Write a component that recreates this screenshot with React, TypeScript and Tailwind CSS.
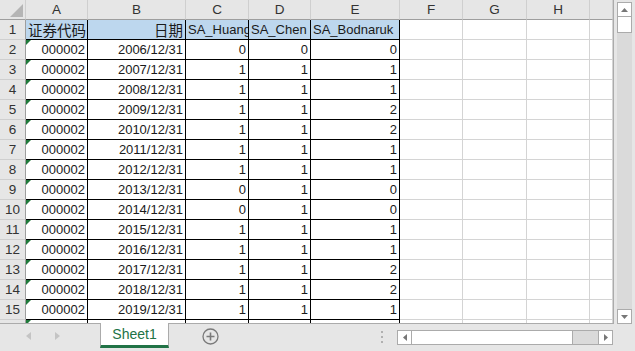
import React from "react";

const colLetters = ["A", "B", "C", "D", "E", "F", "G", "H", ""];

const rows: [string, string, number, number, number][] = [
  ["000002", "2006/12/31", 0, 0, 0],
  ["000002", "2007/12/31", 1, 1, 1],
  ["000002", "2008/12/31", 1, 1, 1],
  ["000002", "2009/12/31", 1, 1, 2],
  ["000002", "2010/12/31", 1, 1, 2],
  ["000002", "2011/12/31", 1, 1, 1],
  ["000002", "2012/12/31", 1, 1, 1],
  ["000002", "2013/12/31", 0, 1, 0],
  ["000002", "2014/12/31", 0, 1, 0],
  ["000002", "2015/12/31", 1, 1, 1],
  ["000002", "2016/12/31", 1, 1, 1],
  ["000002", "2017/12/31", 1, 1, 2],
  ["000002", "2018/12/31", 1, 1, 2],
  ["000002", "2019/12/31", 1, 1, 1],
];

function DataCell({ children, left, blue, flag }: { children?: React.ReactNode; left?: boolean; blue?: boolean; flag?: boolean }) {
  return (
    <div
      className={`relative h-5 overflow-hidden whitespace-nowrap border-r border-b border-black px-[2px] pt-[1px] flex items-center ${
        left ? "justify-start" : "justify-end"
      } ${blue ? "bg-[#bdd7ee]" : "bg-white"}`}
    >
      {flag && (
        <span className="absolute left-0 top-0 w-0 h-0 border-t-[5px] border-r-[5px] border-t-[#1f7a3a] border-r-transparent" />
      )}
      {children}
    </div>
  );
}

function EmptyCell() {
  return <div className="h-5 border-r border-b border-[#d4d4d4] bg-white" />;
}

function RowHeader({ n }: { n: number }) {
  return (
    <div className="h-5 pt-[1px] flex items-center justify-center bg-[#e6e6e6] border-r border-b border-r-[#9e9e9e] border-b-[#cfcfcf] text-[#333] text-[13.5px]">
      {n}
    </div>
  );
}

const cjk = "font-['Noto_Sans_CJK_SC',sans-serif] text-[14.5px] leading-[18px]";

export default function App() {
  return (
    <div className="w-[635px] h-[351px] overflow-hidden bg-[#e6e6e6] font-['Liberation_Sans',Arial,sans-serif] text-[13px] text-[#1a1a1a] flex flex-col">
      <div className="flex h-[324px]">
        {/* sheet grid */}
        <div className="w-[614px] h-[324px] overflow-hidden border-r border-b border-[#ababab] bg-white">
          <div className="grid grid-cols-[26px_62px_98px_63px_62px_89px_63px_64px_63px_1fr]">
            {/* column header row */}
            <div className="relative h-5 bg-[#e6e6e6] border-r border-b border-r-[#cfcfcf] border-b-[#9e9e9e]">
              <svg className="absolute right-[2px] bottom-[2px]" width="13" height="13" viewBox="0 0 13 13">
                <polygon points="13,0 13,13 0,13" fill="#b5b5b5" />
              </svg>
            </div>
            {colLetters.map((c, i) => (
              <div
                key={i}
                className="h-5 pt-[1px] flex items-center justify-center bg-[#e6e6e6] border-r border-b border-r-[#cfcfcf] border-b-[#9e9e9e] text-[#333] text-[13.5px]"
              >
                {c}
              </div>
            ))}

            {/* row 1: headers */}
            <RowHeader n={1} />
            <DataCell left blue>
              <span className={cjk}>证券代码</span>
            </DataCell>
            <DataCell blue>
              <span className={cjk}>日期</span>
            </DataCell>
            <DataCell left blue>SA_Huang</DataCell>
            <DataCell left blue>SA_Chen</DataCell>
            <DataCell left blue>SA_Bodnaruk</DataCell>
            <EmptyCell />
            <EmptyCell />
            <EmptyCell />
            <EmptyCell />

            {rows.map((r, i) => (
              <React.Fragment key={i}>
                <RowHeader n={i + 2} />
                <DataCell flag>{r[0]}</DataCell>
                <DataCell>{r[1]}</DataCell>
                <DataCell>{r[2]}</DataCell>
                <DataCell>{r[3]}</DataCell>
                <DataCell>{r[4]}</DataCell>
                <EmptyCell />
                <EmptyCell />
                <EmptyCell />
                <EmptyCell />
              </React.Fragment>
            ))}

            {/* partially visible row 16 */}
            <RowHeader n={16} />
            <DataCell flag />
            <DataCell />
            <DataCell />
            <DataCell />
            <DataCell />
            <EmptyCell />
            <EmptyCell />
            <EmptyCell />
            <EmptyCell />
          </div>
        </div>

        {/* vertical scrollbar */}
        <div className="flex-1 flex flex-col items-center pt-[2px]">
          <div className="w-[15px] h-[15px] bg-white border border-[#ababab] flex items-center justify-center">
            <svg width="7" height="4" viewBox="0 0 7 4">
              <polygon points="0,4 7,4 3.5,0" fill="#777" />
            </svg>
          </div>
          <div className="w-[15px] h-[16px] bg-white border border-t-0 border-[#ababab]" />
          <div className="w-[15px] flex-1 bg-[#dadada]" />
          <div className="w-[15px] h-[15px] bg-white border border-[#ababab] flex items-center justify-center">
            <svg width="7" height="4" viewBox="0 0 7 4">
              <polygon points="0,0 7,0 3.5,4" fill="#777" />
            </svg>
          </div>
        </div>
      </div>

      {/* sheet tab bar */}
      <div className="flex-1 flex items-start">
        <div className="w-[100px] h-[24px] flex items-center">
          <svg className="ml-[26px]" width="5" height="8" viewBox="0 0 5 8">
            <polygon points="5,0 5,8 0,4" fill="#c4c4c4" />
          </svg>
          <svg className="ml-[24px]" width="5" height="8" viewBox="0 0 5 8">
            <polygon points="0,0 0,8 5,4" fill="#c4c4c4" />
          </svg>
        </div>
        <div className="w-[69px] h-[25px] -mt-px pt-[1px] bg-white border-x border-[#ababab] border-b-[3px] border-b-[#217346] flex items-center justify-center text-[#217346] text-[14px]">
          Sheet1
        </div>
        <div className="ml-[33px] h-[25px] flex items-center">
          <svg width="17" height="17" viewBox="0 0 17 17">
            <circle cx="8.5" cy="8.5" r="7.5" fill="none" stroke="#7a7a7a" strokeWidth="1.3" />
            <path d="M8.5 4.5 V12.5 M4.5 8.5 H12.5" stroke="#7a7a7a" strokeWidth="1.6" />
          </svg>
        </div>
        <div className="ml-[162px] h-[28px] flex flex-col justify-center gap-[3px] pb-[3px]">
          <span className="w-[2px] h-[2px] bg-[#b0b0b0]" />
          <span className="w-[2px] h-[2px] bg-[#b0b0b0]" />
          <span className="w-[2px] h-[2px] bg-[#b0b0b0]" />
        </div>
        <div className="ml-[14px] mt-[6px] w-[216px] h-[15px] flex border border-[#ababab] bg-[#dadada]">
          <div className="w-[14px] h-full bg-white border-r border-[#ababab] flex items-center justify-center">
            <svg width="4" height="7" viewBox="0 0 4 7">
              <polygon points="4,0 4,7 0,3.5" fill="#777" />
            </svg>
          </div>
          <div className="w-[161px] h-full bg-white border-r border-[#ababab]" />
          <div className="flex-1" />
          <div className="w-[14px] h-full bg-white border-l border-[#ababab] flex items-center justify-center">
            <svg width="4" height="7" viewBox="0 0 4 7">
              <polygon points="0,0 0,7 4,3.5" fill="#777" />
            </svg>
          </div>
        </div>
      </div>
    </div>
  );
}
